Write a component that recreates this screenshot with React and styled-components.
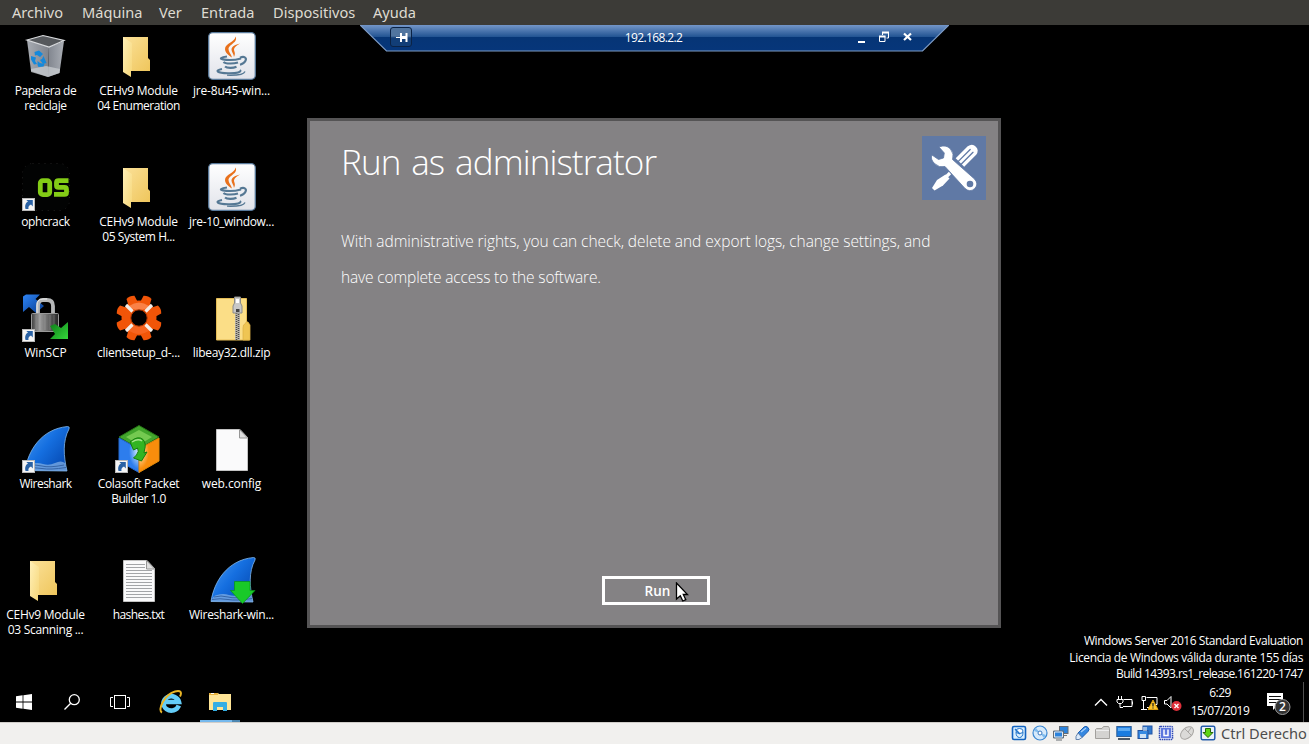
import React from "react";
import styled, { createGlobalStyle } from "styled-components";

const GlobalStyle = createGlobalStyle`
  * { box-sizing: border-box; }
  html, body { margin: 0; padding: 0; background: #000; overflow: hidden; }
  svg { display: block; }
`;

const ui = `"Open Sans", "Noto Sans", sans-serif`;
const host = `"Noto Sans", "Open Sans", sans-serif`;

const Screen = styled.div`
  width: 1309px;
  height: 744px;
  display: flex;
  flex-direction: column;
  background: #000;
  color: #fff;
  font-family: ${ui};
  overflow: hidden;
`;

/* Host window menu */
const MenuBar = styled.nav`
  flex: none;
  height: 25px;
  display: flex;
  align-items: center;
  padding-left: 12px;
  background: #3c3b37;
`;

const MenuItem = styled.span`
  width: ${(p) => p.$w}px;
  font: 14.6px/25px ${host};
  color: #dfdbd2;
  white-space: nowrap;
`;

/* Guest desktop */
const Desktop = styled.main`
  position: relative;
  flex: none;
  height: 657px;
`;

const IconGrid = styled.div`
  display: grid;
  grid-auto-flow: column;
  grid-template-rows: repeat(5, 131px);
  grid-auto-columns: 93px;
  padding-top: 7px;
  margin-left: -1px;
  width: 280px;
`;

const Shortcut = styled.div`
  display: flex;
  flex-direction: column;
  align-items: center;
`;

const Picture = styled.div`
  width: 48px;
  height: 48px;
  margin: 0 0 3px 1px;
`;

const LabelLine = styled.span`
  font: 12px/15px ${ui};
  letter-spacing: ${(p) => p.$ls ?? -0.3}px;
  white-space: nowrap;
`;

const RdpBar = styled.div`
  position: absolute;
  top: 0;
  left: 360px;
  width: 589px;
  height: 27px;
`;

const RdpShape = styled.svg`
  position: absolute;
  inset: 0;
`;

const RdpContent = styled.div`
  position: relative;
  height: 25px;
  display: flex;
  align-items: center;
  padding: 0 35px 0 30px;
`;

const PinButton = styled.div`
  width: 22px;
  height: 20px;
  margin-top: -2px;
  border: 1px solid #0b2346;
  border-radius: 3px;
  background: linear-gradient(#51759f 0 45%, #123e77 55% 100%);
`;

const RdpTitle = styled.span`
  flex: 1;
  padding-left: 37px;
  text-align: center;
  font: 12px/25px ${ui};
  letter-spacing: -0.6px;
`;

const Dialog = styled.section`
  position: absolute;
  top: 93px;
  left: 307px;
  width: 694px;
  height: 510px;
  display: flex;
  flex-direction: column;
  border: 3px solid #555455;
  background: #848284;
  padding: 15px 12px 20px 31px;
`;

const DialogHeader = styled.header`
  display: flex;
  justify-content: space-between;
  align-items: flex-start;
  height: 87px;
`;

const DialogTitle = styled.h1`
  margin: 0;
  font: 300 35px/52px ${ui};
  letter-spacing: -0.9px;
  word-spacing: 2.6px;
`;

const DialogText = styled.p`
  margin: 0;
  font: 300 15.5px/36px ${ui};
  letter-spacing: ${(p) => p.$ls}px;
  white-space: nowrap;
`;

const RunButton = styled.button`
  width: 108px;
  height: 29px;
  margin: auto 0 0 261px;
  padding: 0 0 0 3px;
  border: 3px solid #fff;
  background: transparent;
  color: #fff;
  font: 600 13.5px/22px ${ui};
`;

const Pointer = styled.svg`
  position: absolute;
  left: 675px;
  top: 557px;
`;

const Watermark = styled.div`
  position: absolute;
  right: 6px;
  bottom: -0.6px;
  display: flex;
  flex-direction: column;
  align-items: flex-end;
`;

const WatermarkLine = styled.span`
  font: 12px/16.5px ${ui};
  letter-spacing: ${(p) => p.$ls}px;
  white-space: nowrap;
`;

/* Guest taskbar */
const Taskbar = styled.footer`
  flex: none;
  height: 40px;
  display: flex;
  justify-content: space-between;
`;

const TaskGroup = styled.div`
  display: flex;
`;

const TaskButton = styled.div`
  width: ${(p) => p.$w || 48}px;
  height: 40px;
  display: flex;
  align-items: center;
  justify-content: center;
  margin-left: ${(p) => p.$gap || 0}px;
  border-bottom: 2px solid transparent;
  padding: 2px ${(p) => p.$pad || 0}px 0 0;
  border-image: ${(p) =>
    p.$open ? "linear-gradient(90deg, #76b9ed 0 78%, #4d86b0 78%) 2" : "none"};
`;

const Tray = styled.div`
  display: flex;
  align-items: center;
`;

const TrayIcons = styled.svg`
  margin: 2px -2px 0 0;
`;

const Clock = styled.div`
  width: 76px;
  display: flex;
  flex-direction: column;
  align-items: center;
  font: 12px/18px ${ui};
  margin-top: -1px;
`;

const ClockLine = styled.span`
  letter-spacing: ${(p) => p.$ls}px;
`;

const ShowDesktop = styled.div`
  width: 6px;
  height: 40px;
  border-left: 1px solid #4f4f4f;
`;

/* Host status bar */
const StatusBar = styled.div`
  flex: none;
  height: 22px;
  display: flex;
  align-items: center;
  justify-content: flex-end;
  gap: 5px;
  padding: 0 2px 2px 0;
  border-top: 1px solid #d0cdc9;
  background: #f1f0ee;
`;

const HostKey = styled.span`
  width: 86px;
  font: 14.6px/20px ${host};
  letter-spacing: 0px;
  color: #4c4c4c;
  white-space: nowrap;
`;

const Arrow = () => (
  <g>
    <rect x="0.5" y="35.5" width="12" height="12" fill="#f5f5f5" stroke="#b8b8b8" />
    <path d="M3.500 46c-1-4 .5-6.500 2.500-7.500L4.300 37H10.800v6.500L9 41.500C7 42.500 6 43.500 6.500 46z" fill="#2a62a5" />
  </g>
);

const Recycle = () => (
  <svg width="48" height="48" viewBox="0 0 48 48">
    <defs>
      <linearGradient id="binL" x2="1"><stop stopColor="#a7abb2" /><stop offset="1" stopColor="#7f838b" /></linearGradient>
      <linearGradient id="binR" x2="1"><stop stopColor="#80858e" /><stop offset="1" stopColor="#aaaeb5" /></linearGradient>
    </defs>
    <path d="M5 8L21 3.500 42 8.500 27 15z" fill="#55585c" />
    <path d="M5 8L27 15 26 45 9 39z" fill="url(#binL)" />
    <path d="M27 15L42 9 37.500 41 26 45z" fill="url(#binR)" />
    <path d="M9 37l15-3 14 3-.5 4L26 45 9 40z" fill="#c9cdd2" opacity=".75" />
    <path d="M5 8L21 3.500 42 8.500 27 15z" fill="none" stroke="#d9dbde" strokeWidth="1.200" />
    <g fill="#1489dc">
      <path d="M12.500 20l4.500-1.500 4 3.500-3 3-3-2-2 .5z" />
      <path d="M9 24l5 1.500-1 3.500 2 3-3 .5-3-5z" />
      <path d="M21.500 24l3 7-3.500 1-3-4 2-1z" />
      <path d="M15.500 29l2.500 2 4.500 1-1 2.500-5 .5-1-2z" />
    </g>
  </svg>
);

const Folder = () => (
  <svg width="48" height="48" viewBox="0 0 48 48">
    <defs>
      <linearGradient id="fback" x2="1" y2="1"><stop stopColor="#fbe199" /><stop offset="1" stopColor="#efc65c" /></linearGradient>
      <linearGradient id="ffront" x2="1" y2="1"><stop stopColor="#fff0b8" /><stop offset="1" stopColor="#f6d678" /></linearGradient>
    </defs>
    <path d="M8 5h25v21l2 2v11H8z" fill="url(#fback)" />
    <path d="M8 5l9 6v28h-1v6L8 40z" fill="url(#ffront)" />
  </svg>
);

const Java = () => (
  <svg width="48" height="48" viewBox="0 0 48 48">
    <defs><linearGradient id="jbg" y2="1" x2="0"><stop stopColor="#fff" /><stop offset="1" stopColor="#e1e3ea" /></linearGradient></defs>
    <rect x="0.700" y="0.700" width="46.600" height="46.600" rx="4" fill="url(#jbg)" stroke="#58799a" strokeWidth="1.300" />
    <path d="M27.500 4.500c3 6-7 8-7 12.500 0 3 2.500 5 3.500 8.500-3.500-2-7-5-7-8.500 0-5.500 10-7 10.500-12.500z" fill="#e9711c" />
    <path d="M32 11.500c-3.500 2-6 4-6 6 0 2 2 3.500 0 7.500-.3-3.500-2.500-5-2.500-7.500 0-3 4-5 8.500-6z" fill="#e9711c" />
    <g fill="none" stroke="#557894" strokeWidth="2.100">
      <path d="M19 24.500c-6 .8-8 2.200-4 2.900 5 .8 13 .4 18-1" />
      <path d="M15.500 30c2 2 10 2 14.500.5" />
      <path d="M17 34.500c2 1.800 8 1.800 11.500.3" />
      <path d="M32 25.700c4-2 7 0 5.500 3-1 2-3.500 3.500-5.500 4" />
      <path d="M14 37c-8 1.500-5 4 6 4.300 9 .2 14-1.300 12-3.300" />
      <path d="M37 39.500c-1 3-9 4-18 3.700" strokeWidth="1.300" />
    </g>
  </svg>
);

const Ophcrack = () => (
  <svg width="48" height="48" viewBox="0 0 48 48">
    <rect x="0.500" y="0.500" width="47" height="47" rx="10" fill="#020303" stroke="#202020" strokeDasharray="1 5" />
    <g fill="none" stroke="#83cc16" strokeWidth="4.800">
      <rect x="18.300" y="17.600" width="9.400" height="14" rx="2.500" />
      <path d="M46.500 17.600H36.500q-2 0-2 2v2.800q0 2 2 2h6q2 0 2 2v3q0 2-2 2H32" />
    </g>
    <Arrow />
  </svg>
);

const WinScp = () => (
  <svg width="48" height="48" viewBox="0 0 48 48">
    <defs>
      <linearGradient id="lock" x2="1"><stop stopColor="#3f3f3f" /><stop offset=".3" stopColor="#9b9b9b" /><stop offset=".6" stopColor="#6b6b6b" /><stop offset="1" stopColor="#252525" /></linearGradient>
      <linearGradient id="wblue" x2="1" y2="1"><stop stopColor="#2e84f5" /><stop offset="1" stopColor="#083c90" /></linearGradient>
      <linearGradient id="wgreen" x2="1" y2="1"><stop stopColor="#0d7b18" /><stop offset="1" stopColor="#35d83b" /></linearGradient>
    </defs>
    <path d="M1 2.500L4 .500H18L13.500 5 22 12l-8 7-7-6-6 5z" fill="url(#wblue)" />
    <path d="M16 20V12q0-6 5-6h4q6 0 6 6v8" fill="none" stroke="#b5b7b8" strokeWidth="3.800" />
    <path d="M15 19V11q0-6 6-6h4" fill="none" stroke="#eee" strokeWidth="1" />
    <rect x="9.500" y="19.500" width="27" height="18" rx="1" fill="url(#lock)" stroke="#999" />
    <path d="M14 21v15M18 21v15M23 21v15M28 21v15M32 21v15" stroke="#bbb" opacity=".3" />
    <path d="M28 32l5-2 6 4 7-6v17H28l5-5z" fill="url(#wgreen)" />
    <Arrow />
  </svg>
);

const Gear = () => (
  <svg width="48" height="48" viewBox="0 0 48 48">
    <g fill="#f15508">
      <circle cx="24" cy="24" r="17.500" />
      {[22.5, 67.5, 112.5, 157.5, 202.5, 247.5, 292.5, 337.5].map((a) => (
        <path key={a} d="M19 9l.7-7.300q4.300-2 8.600 0l.7 7.300z" transform={`rotate(${a} 24 24)`} />
      ))}
    </g>
    <path d="M14 12q10-7 20 0-3 4-10 4T14 12z" fill="#ff9a68" opacity=".65" />
    <path d="M13 36q11 8 22 0-3-5-11-5t-11 5z" fill="#ff7a3d" opacity=".45" />
    <path d="M11 11l6.500 6.500M37 11l-6.500 6.500M11 37l6.500-6.500M37 37l-6.500-6.500" stroke="#f3eee9" strokeWidth="3.200" />
    <circle cx="24" cy="24" r="8.200" fill="#000" stroke="#b03701" />
  </svg>
);

const Zip = () => (
  <svg width="48" height="48" viewBox="0 0 48 48">
    <path d="M8.500 4.500h30v25l3 3v13.500h-33z" fill="#fbde87" stroke="#e5bd57" />
    <path d="M35 46V34q0-4 2-4 1-3 3-2l2 3v15z" fill="#efc553" stroke="#e0b347" strokeWidth=".8" />
    <path d="M29.500 17v29" stroke="#bdb9ad" strokeWidth="5" />
    <path d="M28.500 17v29" stroke="#4c4a45" strokeWidth="1.500" strokeDasharray="1 1" />
    <path d="M30.500 18v28" stroke="#4c4a45" strokeWidth="1.500" strokeDasharray="1 1" />
    <path d="M26.500 3h6v6l1.500 3v7h-9v-7l1.500-3z" fill="#c8c8c8" stroke="#8b8b88" />
    <rect x="28" y="5" width="3" height="4" fill="#fff" />
    <rect x="28" y="15" width="3.500" height="3" fill="#444" />
  </svg>
);

const Shark = ({ installer }) => (
  <svg width="48" height="48" viewBox="0 0 48 48">
    <defs><linearGradient id="fin" x2="1" y2=".8"><stop stopColor="#4a9df4" /><stop offset=".5" stopColor="#156fe0" /><stop offset="1" stopColor="#0548b0" /></linearGradient></defs>
    <path d="M3 45.500C6 26 19 4 45.500 1.500q2.500 0 1.500 2.500C40.500 16 41.500 31 45 46z" fill="url(#fin)" stroke="#82b8ec" strokeWidth=".8" />
    <path d="M3 45.500q2-6 6-6.500 6-2 12 0t12-1 10 0l2 8z" fill="#87b3e6" opacity=".7" />
    <path d="M6 41q7-2 14 0t22-1M4 43.500q8-1.500 16 0t24-1" fill="none" stroke="#315f9f" strokeWidth=".9" />
    {installer ? (
      <path d="M26.500 25.500h15.500v9h5L34.500 47.500 22.500 34.500h4z" fill="#19c928" stroke="#079512" strokeWidth=".7" />
    ) : (
      <Arrow />
    )}
  </svg>
);

const Colasoft = () => (
  <svg width="48" height="48" viewBox="0 0 48 48">
    <defs>
      <radialGradient id="cgl" cx="1" cy=".4"><stop stopColor="#e5f7ff" /><stop offset="1" stopColor="#2d7ded" /></radialGradient>
      <radialGradient id="cor" cx="0" cy=".4"><stop stopColor="#fff0cd" /><stop offset="1" stopColor="#f98d0c" /></radialGradient>
    </defs>
    <path d="M24 .500L44 12 24 24 4 12z" fill="#42a52c" stroke="#267416" />
    <path d="M24 5L37 12 24 20 11 12z" fill="#74c950" />
    <path d="M4 13l20 11v23.500L4 36z" fill="url(#cgl)" stroke="#2568ce" />
    <path d="M44 13L24 24v23.500L44 36z" fill="url(#cor)" stroke="#e28a0a" />
    <path d="M15 17q8-7 13-2.500 3.500 4 1.500 10.500l-.5 3 3-1-5.500 9-8-3 3-3q3-4 1-7l-4 2z" fill="#32b422" stroke="#167d0d" />
    <path d="M17 17q6-4 10-1" fill="none" stroke="#a7e58d" strokeWidth="1.500" />
    <Arrow />
  </svg>
);

const Page = ({ lines }) => (
  <svg width="48" height="48" viewBox="0 0 48 48">
    <path d="M8.500 4.500H32l7.500 8v33h-31z" fill="#fafafb" stroke="#c2c2c2" />
    <path d="M31.500 4.500v8.500h8z" fill="#dedede" stroke="#969696" />
    {lines && (
      <path
        d="M11 8.500h19M11 11.500h19M11 14.500h26M11 17.500h26M11 20.500h26M11 23.500h26M11 26.500h26M11 29.500h26M11 32.500h26M11 35.500h26M11 38.500h26M11 41.500h26"
        stroke="#a3a5a8"
      />
    )}
  </svg>
);

const shortcuts = [
  { art: <Recycle />, lines: [["Papelera de", -0.45], ["reciclaje", -0.35]] },
  { art: <Ophcrack />, lines: [["ophcrack", -0.35]] },
  { art: <WinScp />, lines: [["WinSCP", -0.1]] },
  { art: <Shark />, lines: [["Wireshark", -0.5]] },
  { art: <Folder />, lines: [["CEHv9 Module", -0.25], ["03 Scanning ...", -0.3]] },
  { art: <Folder />, lines: [["CEHv9 Module", -0.25], ["04 Enumeration", -0.5]] },
  { art: <Folder />, lines: [["CEHv9 Module", -0.25], ["05 System H...", -0.45]] },
  { art: <Gear />, lines: [["clientsetup_d-...", -0.27]] },
  { art: <Colasoft />, lines: [["Colasoft Packet", -0.27], ["Builder 1.0", -0.5]] },
  { art: <Page lines />, lines: [["hashes.txt", -0.6]] },
  { art: <Java />, lines: [["jre-8u45-win...", -0.15]] },
  { art: <Java />, lines: [["jre-10_window...", -0.35]] },
  { art: <Zip />, lines: [["libeay32.dll.zip", -0.3]] },
  { art: <Page />, lines: [["web.config", -0.1]] },
  { art: <Shark installer />, lines: [["Wireshark-win...", -0.3]] },
];

const menu = [
  ["Archivo", 70],
  ["Máquina", 77],
  ["Ver", 42],
  ["Entrada", 72],
  ["Dispositivos", 100],
  ["Ayuda", 60],
];

const Tools = () => (
  <svg width="64" height="64" viewBox="0 0 64 64">
    <rect width="64" height="64" fill="#6079a5" />
    <g transform="translate(45 19.500) rotate(45)">
      <path d="M-6 10V-7q1-5.500 6-5.500t6 5.500V10z" fill="#fff" />
      <path d="M-2 11V-6.500M2 11V-6.500" stroke="#6079a5" strokeWidth="1.300" strokeLinecap="round" />
    </g>
    <path d="M28 37l-5 5" stroke="#fff" strokeWidth="3.200" />
    <path d="M23.500 38.500l4 4-6.500 7-8.500 5-2.500-2.500 5-8z" fill="#fff" />
    <path
      d="M17 11q7-3 11.500 2 4 5 2 10.500L52.500 43q4.500 5 .3 9.500-5 4.500-10-.3L23 30.500q-6 1.500-10.500-3T10 19l6.500 4.500 5-1.500.8-5z"
      fill="#fff" stroke="#6079a5" strokeWidth=".8"
    />
    <circle cx="48" cy="48" r="3.300" fill="#6079a5" />
  </svg>
);

const statusIcons = [
  <g key="hdd"><rect x="1.500" y="1.500" width="13" height="13" rx="1.500" fill="#d9efff" stroke="#1263c0" strokeWidth="1.600" /><ellipse cx="8.500" cy="6" rx="3.500" ry="2.500" fill="#fff" stroke="#2375ca" /><path d="M5 7q0 5.500 3.500 5.500T12 7" fill="none" stroke="#2375ca" /><path d="M4 4l5 5" stroke="#2375ca" strokeWidth="1.300" /></g>,
  <g key="cd"><circle cx="8" cy="8" r="7" fill="#d6eafb" stroke="#3a87d2" strokeWidth="1.200" /><path d="M8 8L4 3 2 6zM8 8l4 5 2-3z" fill="#7fbbed" /><circle cx="8" cy="8" r="2" fill="#fff" stroke="#3a79c0" /></g>,
  <g key="net"><rect x="6.500" y="1.500" width="8.500" height="7" fill="#2c83dc" stroke="#666c73" /><path d="M9 10.500h5" stroke="#777" /><path d="M.5 6v7h10V6z" fill="#2c83dc" stroke="#666c73" /><path d="M1.500 7h8v5h-8z" fill="none" stroke="#e6eaee" /><path d="M3 15h6" stroke="#666c73" /></g>,
  <g key="usb"><path d="M4 8l6-6q2-1.500 4 .5t0 4L8 12.500z" fill="#3688e0" stroke="#1d5eb2" /><path d="M4 8l4 4.500-3 2H2v-3z" fill="#dbeafa" stroke="#6383ac" /><path d="M7 7l5-4" stroke="#a9d1fa" strokeWidth="1.300" /></g>,
  <g key="shared"><path d="M.5 13.500v-9l1-1H7l1.500-2h5l1 2v10z" fill="#d4d3d1" stroke="#a2a09d" /><path d="M1 5.500h13" stroke="#eee" /></g>,
  <g key="display"><rect x=".8" y="1.500" width="14.400" height="10" fill="#1b7ce0" stroke="#315f98" /><path d="M2 3h12v3H2z" fill="#5caaf2" /><path d="M2 14h12" stroke="#4c5867" strokeWidth="2" /></g>,
  <g key="rec"><rect x="6" y="1" width="9" height="8" fill="#2f78ce" stroke="#2455a4" /><rect x="1" y="5.500" width="10" height="8" fill="#3689e2" stroke="#24509a" /><path d="M7 2v4M9 2v4" stroke="#fff" /><rect x="3" y="9" width="6" height="4" fill="#cfe1f5" /></g>,
  <g key="cpu"><rect x="1.500" y="1.500" width="13" height="13" rx="1" fill="#e6eafc" stroke="#2f49b4" strokeWidth="1.500" strokeDasharray="1.500 .7" /><rect x="3" y="3" width="10" height="10" fill="#5c76dd" /><path d="M6 4.500v6h4v-6" fill="none" stroke="#fff" strokeWidth="1.500" /></g>,
  <g key="mouse"><ellipse cx="8" cy="8" rx="5" ry="7.500" transform="rotate(48 8 8)" fill="#dbdad8" stroke="#a9a7a4" /><path d="M6 4l6 6M9 7l3-4" fill="none" stroke="#a9a7a4" /></g>,
  <g key="key"><rect x="1.200" y="1.200" width="13.600" height="13.600" rx="1.500" fill="#e9f1fa" stroke="#245cac" strokeWidth="1.500" /><path d="M5.500 3.500h5v4H13L8 12.500 3 7.500h2.500z" fill="#5ed415" stroke="#276907" /></g>,
];

export default function App() {
  return (
    <Screen>
      <GlobalStyle />
      <MenuBar>
        {menu.map(([t, w]) => (
          <MenuItem key={t} $w={w}>{t}</MenuItem>
        ))}
      </MenuBar>

      <Desktop>
        <IconGrid>
          {shortcuts.map((s, i) => (
            <Shortcut key={i}>
              <Picture>{s.art}</Picture>
              {s.lines.map(([t, ls]) => (
                <LabelLine key={t} $ls={ls}>{t}</LabelLine>
              ))}
            </Shortcut>
          ))}
        </IconGrid>

        <RdpBar>
          <RdpShape width="589" height="27" viewBox="0 0 589 27">
            <defs>
              <linearGradient id="rdp" x2="0" y2="1">
                <stop stopColor="#7396c8" />
                <stop offset=".45" stopColor="#235493" />
                <stop offset=".47" stopColor="#063576" />
                <stop offset="1" stopColor="#06367a" />
              </linearGradient>
            </defs>
            <path d="M0 0L26.500 26H562.500L589 0z" fill="url(#rdp)" />
            <path d="M0 0L26.500 26H562.500L589 0" fill="none" stroke="#7f9cc4" strokeWidth="1.200" />
          </RdpShape>
          <RdpContent>
            <PinButton>
              <svg width="20" height="18" viewBox="0 0 20 18">
                <path d="M5 9.500h5" stroke="#fff" />
                <path d="M10 5v9M15.500 5v9" fill="none" stroke="#fff" strokeWidth="2" />
                <path d="M11 9.500h4" stroke="#fff" strokeWidth="3" />
              </svg>
            </PinButton>
            <RdpTitle>192.168.2.2</RdpTitle>
            <svg width="56" height="14" viewBox="0 0 56 14">
              <path d="M0 11h7" stroke="#fff" strokeWidth="2" />
              <path d="M24.500 4V1.500h6v5.500h-2M21.500 5.500h5.500v5h-5.500z" fill="none" stroke="#fff" />
              <path d="M21 5.500h6.500M24 1.500h7" stroke="#fff" strokeWidth="2" />
              <path d="M46 2.500l7 6.500M53 2.500l-7 6.500" stroke="#fff" strokeWidth="2.200" />
            </svg>
          </RdpContent>
        </RdpBar>

        <Dialog>
          <DialogHeader>
            <DialogTitle>Run as administrator</DialogTitle>
            <Tools />
          </DialogHeader>
          <DialogText $ls={-0.07}>With administrative rights, you can check, delete and export logs, change settings, and</DialogText>
          <DialogText $ls={-0.14}>have complete access to the software.</DialogText>
          <RunButton>Run</RunButton>
        </Dialog>
        <Pointer width="14" height="22" viewBox="0 0 14 22">
          <path d="M1.500 1v16l3.800-3.300 2.500 5.300 3-1.300-2.500-5.200h4.200z" fill="#fff" stroke="#000" strokeWidth="1.300" />
        </Pointer>

        <Watermark>
          <WatermarkLine $ls={-0.44}>Windows Server 2016 Standard Evaluation</WatermarkLine>
          <WatermarkLine $ls={-0.36}>Licencia de Windows válida durante 155 días</WatermarkLine>
          <WatermarkLine $ls={-0.6}>Build 14393.rs1_release.161220-1747</WatermarkLine>
        </Watermark>
      </Desktop>

      <Taskbar>
        <TaskGroup>
          <TaskButton>
            <svg width="16" height="16" viewBox="0 0 16 16" fill="#fff">
              <path d="M0 2.200L6.600 1.300V7.500H0zM7.400 1.200L16 0V7.500H7.400zM0 8.400H6.600V14.700L0 13.800zM7.400 8.400H16V16L7.400 14.800z" />
            </svg>
          </TaskButton>
          <TaskButton>
            <svg width="16" height="16" viewBox="0 0 16 16" fill="none" stroke="#fff" strokeWidth="1.300">
              <circle cx="10.300" cy="5.700" r="5" />
              <path d="M6.700 9.300L.5 15.500" />
            </svg>
          </TaskButton>
          <TaskButton>
            <svg width="20" height="14" viewBox="0 0 20 14" fill="none" stroke="#fff">
              <rect x="4.500" y=".5" width="11" height="13" />
              <path d="M3 2.500H.5v9H3M17 2.500h2.500v9H17" />
            </svg>
          </TaskButton>
          <TaskButton $w={40} $gap={6}>
            <svg width="24" height="24" viewBox="0 0 24 24">
              <path d="M20.800 15.500a7.800 7.200 0 1 1 .2-3.500H7.500" fill="none" stroke="#64cdf8" strokeWidth="4.600" />
              <path d="M4 22.500C-1 20 7 4 17 1.500c6-1.500 7 1 5 5" fill="none" stroke="#e9b526" strokeWidth="2" />
            </svg>
          </TaskButton>
          <TaskButton $w={40} $gap={10} $open>
            <svg width="24" height="20" viewBox="0 0 24 20">
              <path d="M1 1h9l1 1h12v16H1z" fill="#ffe596" />
              <path d="M1 1h9v2H1z" fill="#e9b440" />
              <path d="M3 1h3v1H3z" fill="#fff" />
              <path d="M5 19v-8q0-1 1-1h12q1 0 1 1v8h-4v-4H9v4z" fill="#35aee4" />
            </svg>
          </TaskButton>
        </TaskGroup>
        <Tray>
          <TrayIcons width="90" height="18" viewBox="0 0 90 18" fill="none" stroke="#fff">
            <path d="M1 11.500L7 5.500l6 6" strokeWidth="1.400" />
            <path d="M29.500 5.500h8.500v7H29M38.500 7.500v3" />
            <path d="M24.500 2v3M27.500 2v3M23 5.500h6v2.500l-1.500 1.500h-3L23 8zM26 9.500v4h3" />
            <path d="M52.500 3.500h10.500v7H57M48 2.500h3.500v4H48zM49.500 7v8.500M47 15.500h6M57 13.500h-4" />
            <path d="M59 6l5 9.500H54z" fill="#fcc52c" stroke="#d99e12" />
            <path d="M59 9v3.500M59 13.500v1" stroke="#222" strokeWidth="1.300" />
            <path d="M70.500 6.500h2.500l4-4v11.500l-4-4h-2.500z" />
            <circle cx="82.500" cy="12" r="5" fill="#df2f3a" stroke="none" />
            <path d="M80.500 10l4 4M84.500 10l-4 4" strokeWidth="1.400" />
          </TrayIcons>
          <Clock>
            <ClockLine $ls={-0.6}>6:29</ClockLine>
            <ClockLine $ls={-0.5}>15/07/2019</ClockLine>
          </Clock>
          <TaskButton $w={45} $pad={4}>
            <svg width="24" height="26" viewBox="0 0 24 26">
              <path d="M0 4h16v13H10l-4 4v-4H0z" fill="#fff" />
              <path d="M2 7.500h12M2 10.500h12M2 13.500h8" stroke="#111" />
              <circle cx="15.500" cy="18" r="7.500" fill="#333" stroke="#999" />
              <text x="15.500" y="22.300" textAnchor="middle" fontFamily="Open Sans" fontWeight="600" fontSize="12" fill="#fff">2</text>
            </svg>
          </TaskButton>
          <ShowDesktop />
        </Tray>
      </Taskbar>

      <StatusBar>
        {statusIcons.map((icon, i) => (
          <svg key={i} width="16" height="16" viewBox="0 0 16 16">{icon}</svg>
        ))}
        <HostKey>Ctrl Derecho</HostKey>
      </StatusBar>
    </Screen>
  );
}
